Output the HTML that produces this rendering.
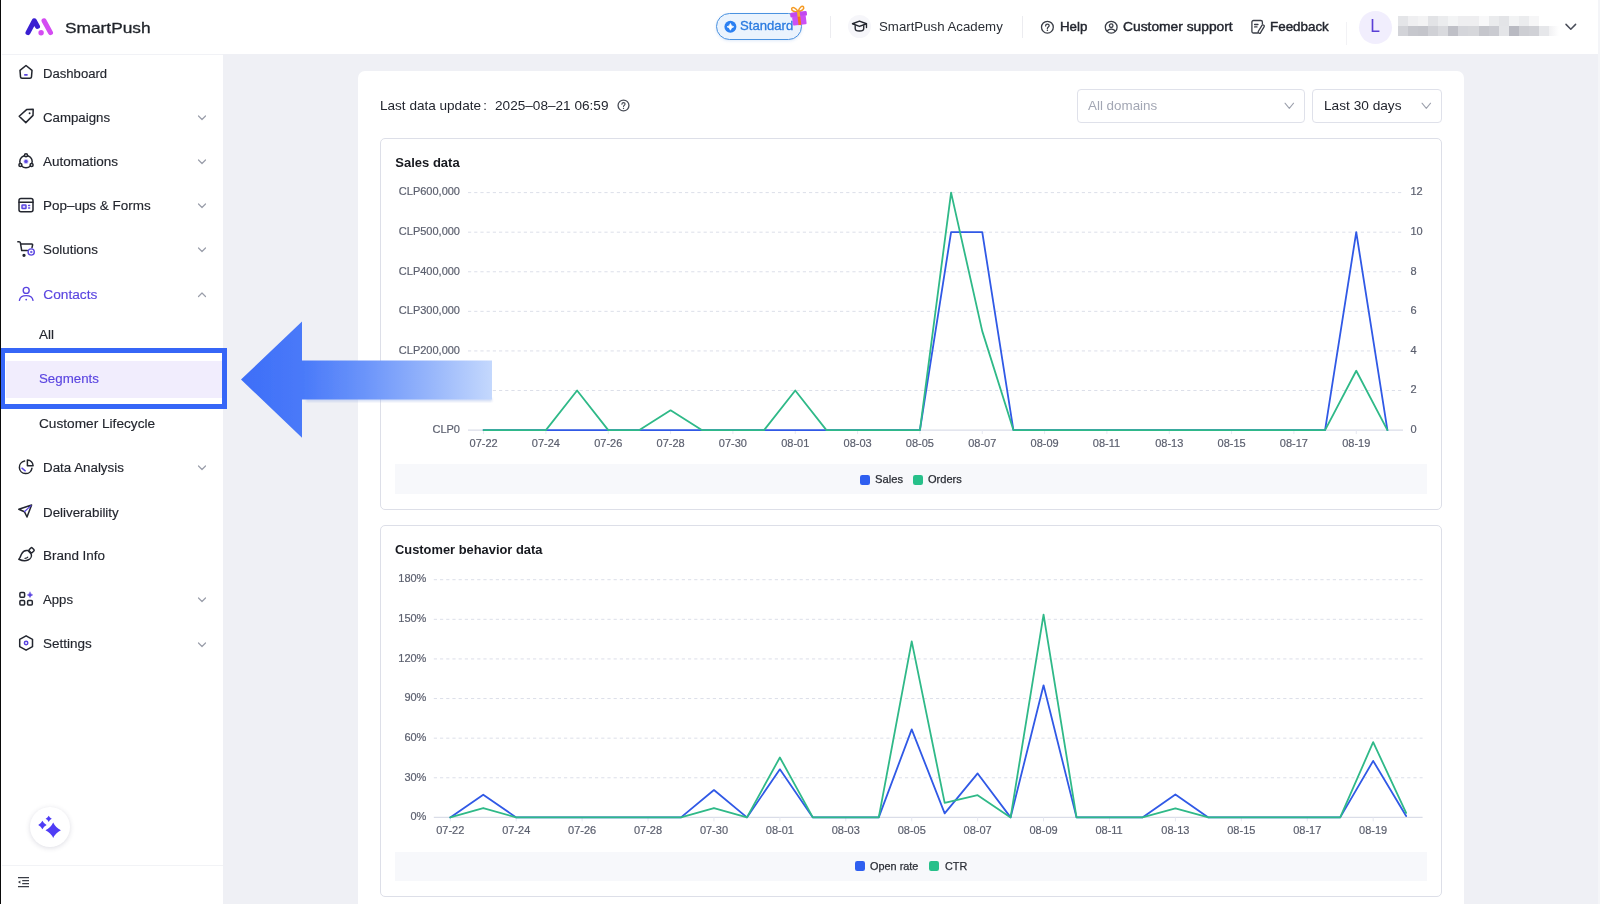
<!DOCTYPE html>
<html><head><meta charset="utf-8"><title>SmartPush</title>
<style>
*{box-sizing:border-box;margin:0;padding:0}
html,body{width:1600px;height:904px;overflow:hidden;background:#eff0f5;font-family:"Liberation Sans",sans-serif;}
.t{position:absolute;white-space:nowrap;}
.abs{position:absolute;}
svg{position:absolute;overflow:visible}
</style></head><body><div id="root" style="position:absolute;left:0;top:0;width:1600px;height:904px;will-change:transform;">

<div class="abs" style="left:0;top:0;width:1600px;height:54px;background:#fff;"></div>
<svg style="left:0;top:0" width="70" height="54" viewBox="0 0 70 54">
<path d="M28 32.6 L34.3 20.8 L37.5 26.4" fill="none" stroke="#3a1fd1" stroke-width="5" stroke-linecap="round" stroke-linejoin="round"/>
<path d="M44 20.8 L50.5 32.6" fill="none" stroke="#d44cf2" stroke-width="5" stroke-linecap="round"/>
<circle cx="41.1" cy="32.7" r="2.7" fill="#d44cf2"/>
</svg>
<div class="t" style="left:64.50px;top:17.75px;font-size:15.4px;line-height:20px;color:#1f2329;transform:scaleX(1.1251);transform-origin:0 50%;-webkit-text-stroke:0.3px #1f2329;">SmartPush</div>
<div class="abs" style="left:715.6px;top:13.2px;width:86.6px;height:26.6px;border-radius:14px;border:1.5px solid #4a92e0;box-shadow:0 1px 3px rgba(80,140,220,.18);background:#eaf3fd;"></div>
<svg style="left:724px;top:20px" width="14" height="14" viewBox="0 0 14 14">
<circle cx="6.4" cy="6.8" r="6" fill="#2b80f2"/>
<path d="M6.4 3.4Q7 6.2 9.8 6.8Q7 7.4 6.4 10.2Q5.8 7.4 3 6.8Q5.8 6.2 6.4 3.4Z" fill="#fff" stroke="#fff" stroke-width=".7" stroke-linejoin="round"/></svg>
<div class="t" style="left:739.80px;top:16.25px;font-size:12.6px;line-height:20px;color:#2b7be0;transform:scaleX(1.0402);transform-origin:0 50%;-webkit-text-stroke:0.3px #2b7be0;">Standard</div>
<svg style="left:788px;top:4px" width="22" height="24" viewBox="0 0 22 24"><g transform="rotate(-7 10.8 13)">
<path d="M10.9 8C9.2 3.6 5.7 1.6 4.7 3.9C4 6 7.5 7.6 10.9 8Z" fill="none" stroke="#f59a23" stroke-width="1.5"/>
<path d="M10.9 8C12.2 3.4 15.8 1.5 16.8 3.7C17.5 5.8 14.2 7.5 10.9 8Z" fill="none" stroke="#f59a23" stroke-width="1.5"/>
<rect x="2.5" y="7.8" width="16.8" height="4.8" rx="1.4" fill="#c248f0"/>
<rect x="4.1" y="12" width="13.7" height="9" rx="1.2" fill="#cc50f4"/>
<rect x="9.6" y="12.4" width="2.7" height="8.7" fill="#f6701c"/>
<rect x="9.6" y="7.8" width="2.7" height="4.8" fill="#f8ae2c"/>
</g></svg>
<div class="abs" style="left:830px;top:16px;width:1px;height:22px;background:#ececf0;"></div>
<div class="abs" style="left:848.4px;top:15.3px;width:22.8px;height:22.8px;border-radius:12px;background:#f6f6fa;"></div>
<svg style="left:851.2px;top:19.4px" width="17.3" height="14.6" viewBox="0 0 19 16">
<path d="M1.6 5.2L9.3 2.2L17 5.2L9.3 8.2Z" fill="none" stroke="#23262f" stroke-width="1.5" stroke-linejoin="round"/>
<path d="M4.6 6.8V10.4C4.6 12.2 6.8 13.2 9.3 13.2C11.8 13.2 14 12.2 14 10.4V6.8" fill="none" stroke="#23262f" stroke-width="1.5"/>
<path d="M17 5.4V9.4" stroke="#23262f" stroke-width="1.5" stroke-linecap="round"/>
</svg>
<div class="t" style="left:879.30px;top:17.25px;font-size:12.2px;line-height:20px;color:#2b2f36;transform:scaleX(1.0877);transform-origin:0 50%;">SmartPush Academy</div>
<div class="abs" style="left:1022px;top:16px;width:1px;height:22px;background:#ececf0;"></div>
<svg style="left:1040px;top:20px" width="15" height="15" viewBox="0 0 15 15">
<circle cx="7.4" cy="7.2" r="5.9" fill="none" stroke="#3a3e47" stroke-width="1.3"/>
<path d="M5.6 5.9C5.6 4.7 6.4 4.1 7.4 4.1C8.5 4.1 9.2 4.8 9.2 5.7C9.2 6.9 7.4 7 7.4 8.5" fill="none" stroke="#3a3e47" stroke-width="1.3" stroke-linecap="round"/>
<circle cx="7.4" cy="10.3" r="0.75" fill="#30343b"/></svg>
<div class="t" style="left:1059.60px;top:17.25px;font-size:12.2px;line-height:20px;color:#23262f;transform:scaleX(1.0918);transform-origin:0 50%;-webkit-text-stroke:0.4px #23262f;">Help</div>
<svg style="left:1104px;top:20px" width="15" height="15" viewBox="0 0 15 15">
<circle cx="7.2" cy="7.2" r="5.9" fill="none" stroke="#3a3e47" stroke-width="1.3"/>
<circle cx="7.2" cy="5.7" r="1.8" fill="none" stroke="#3a3e47" stroke-width="1.3"/>
<path d="M3.2 11.6C3.8 9.8 5.4 9.2 7.2 9.2C9 9.2 10.6 9.8 11.2 11.6" fill="none" stroke="#3a3e47" stroke-width="1.3"/></svg>
<div class="t" style="left:1123.40px;top:17.25px;font-size:12.2px;line-height:20px;color:#23262f;transform:scaleX(1.1324);transform-origin:0 50%;-webkit-text-stroke:0.4px #23262f;">Customer support</div>
<svg style="left:1250px;top:19px" width="16" height="16" viewBox="0 0 16 16" fill="none" stroke="#3a3e47" stroke-width="1.3" stroke-linecap="round" stroke-linejoin="round">
<path d="M7.6 14H3.5C2.6 14 1.9 13.3 1.9 12.4V3.1C1.9 2.2 2.6 1.5 3.5 1.5H10.8C11.7 1.5 12.4 2.2 12.4 3.1V5"/>
<path d="M4.6 5.5H8M4.6 7.9H7"/>
<rect x="-1.3" y="-4.6" width="2.6" height="9.2" rx="1" transform="translate(11.2 10.1) rotate(31)" fill="#fff"/>
</svg>
<div class="t" style="left:1269.60px;top:17.25px;font-size:12.2px;line-height:20px;color:#23262f;transform:scaleX(1.0987);transform-origin:0 50%;-webkit-text-stroke:0.4px #23262f;">Feedback</div>
<div class="abs" style="left:1346px;top:22px;width:1px;height:22.5px;background:#f2f2f5;"></div>
<div class="abs" style="left:1358.5px;top:10.5px;width:33px;height:33px;border-radius:17px;background:#f1eefd;"></div>
<div class="t" style="left:1370.30px;top:16.25px;font-size:17.5px;line-height:20px;color:#5a3fd6;">L</div>
<div class="abs" style="left:1398.00px;top:15.5px;width:10.2px;height:10px;background:#e4e5e8"></div>
<div class="abs" style="left:1398.00px;top:25.5px;width:10.2px;height:10px;background:#d2d3d8"></div>
<div class="abs" style="left:1408.07px;top:15.5px;width:10.2px;height:10px;background:#efeff1"></div>
<div class="abs" style="left:1408.07px;top:25.5px;width:10.2px;height:10px;background:#c6c7cd"></div>
<div class="abs" style="left:1418.14px;top:15.5px;width:10.2px;height:10px;background:#f3f3f4"></div>
<div class="abs" style="left:1418.14px;top:25.5px;width:10.2px;height:10px;background:#c4c5cb"></div>
<div class="abs" style="left:1428.21px;top:15.5px;width:10.2px;height:10px;background:#e2e3e6"></div>
<div class="abs" style="left:1428.21px;top:25.5px;width:10.2px;height:10px;background:#d0d1d6"></div>
<div class="abs" style="left:1438.28px;top:15.5px;width:10.2px;height:10px;background:#ebecee"></div>
<div class="abs" style="left:1438.28px;top:25.5px;width:10.2px;height:10px;background:#d9dade"></div>
<div class="abs" style="left:1448.35px;top:15.5px;width:10.2px;height:10px;background:#f3f4f5"></div>
<div class="abs" style="left:1448.35px;top:25.5px;width:10.2px;height:10px;background:#bfc0c7"></div>
<div class="abs" style="left:1458.42px;top:15.5px;width:10.2px;height:10px;background:#eeeef0"></div>
<div class="abs" style="left:1458.42px;top:25.5px;width:10.2px;height:10px;background:#d4d5da"></div>
<div class="abs" style="left:1468.49px;top:15.5px;width:10.2px;height:10px;background:#eeeef0"></div>
<div class="abs" style="left:1468.49px;top:25.5px;width:10.2px;height:10px;background:#d6d7db"></div>
<div class="abs" style="left:1478.56px;top:15.5px;width:10.2px;height:10px;background:#f8f8f9"></div>
<div class="abs" style="left:1478.56px;top:25.5px;width:10.2px;height:10px;background:#c5c6cc"></div>
<div class="abs" style="left:1488.63px;top:15.5px;width:10.2px;height:10px;background:#eaebed"></div>
<div class="abs" style="left:1488.63px;top:25.5px;width:10.2px;height:10px;background:#cacbd1"></div>
<div class="abs" style="left:1498.70px;top:15.5px;width:10.2px;height:10px;background:#e3e4e7"></div>
<div class="abs" style="left:1498.70px;top:25.5px;width:10.2px;height:10px;background:#e4e5e8"></div>
<div class="abs" style="left:1508.77px;top:15.5px;width:10.2px;height:10px;background:#f2f3f4"></div>
<div class="abs" style="left:1508.77px;top:25.5px;width:10.2px;height:10px;background:#b9bac2"></div>
<div class="abs" style="left:1518.84px;top:15.5px;width:10.2px;height:10px;background:#ebecee"></div>
<div class="abs" style="left:1518.84px;top:25.5px;width:10.2px;height:10px;background:#cdced3"></div>
<div class="abs" style="left:1528.91px;top:15.5px;width:10.2px;height:10px;background:#f6f6f7"></div>
<div class="abs" style="left:1528.91px;top:25.5px;width:10.2px;height:10px;background:#d0d1d6"></div>
<div class="abs" style="left:1538.98px;top:15.5px;width:10.2px;height:10px;background:#ffffff"></div>
<div class="abs" style="left:1538.98px;top:25.5px;width:10.2px;height:10px;background:#e6e7ea"></div>
<div class="abs" style="left:1549px;top:25.5px;width:10px;height:10px;background:linear-gradient(90deg,#f1f1f3,#ffffff)"></div>
<svg style="left:1564px;top:21px" width="14" height="12" viewBox="0 0 14 12">
<path d="M2 3.4L6.8 8.2L11.6 3.4" fill="none" stroke="#4a4e5a" stroke-width="1.5" stroke-linecap="round" stroke-linejoin="round"/></svg>
<div class="abs" style="left:1598px;top:0;width:2px;height:904px;background:#f4f5f8;"></div>
<div class="abs" style="left:0;top:54px;width:223px;height:850px;background:#fff;"></div>
<div class="abs" style="left:2px;top:54px;width:221px;height:1px;background:#f1f2f6;"></div>
<div class="t" style="left:43.30px;top:63.75px;font-size:13.7px;line-height:20px;color:#23262e;transform:scaleX(0.9579);transform-origin:0 50%;-webkit-text-stroke:0.15px #23262e;">Dashboard</div>
<div class="t" style="left:43.30px;top:107.75px;font-size:13.7px;line-height:20px;color:#23262e;transform:scaleX(0.9683);transform-origin:0 50%;-webkit-text-stroke:0.15px #23262e;">Campaigns</div>
<svg style="left:197.3px;top:112.8px" width="10" height="10" viewBox="0 0 10 10"><path d="M1.5 3L5 6.5L8.5 3" fill="none" stroke="#9a9eaa" stroke-width="1.2" stroke-linecap="round" stroke-linejoin="round"/></svg>
<div class="t" style="left:43.30px;top:151.75px;font-size:13.7px;line-height:20px;color:#23262e;transform:scaleX(0.9874);transform-origin:0 50%;-webkit-text-stroke:0.15px #23262e;">Automations</div>
<svg style="left:197.3px;top:156.9px" width="10" height="10" viewBox="0 0 10 10"><path d="M1.5 3L5 6.5L8.5 3" fill="none" stroke="#9a9eaa" stroke-width="1.2" stroke-linecap="round" stroke-linejoin="round"/></svg>
<div class="t" style="left:43.30px;top:195.75px;font-size:13.7px;line-height:20px;color:#23262e;transform:scaleX(0.9823);transform-origin:0 50%;-webkit-text-stroke:0.15px #23262e;">Pop–ups &amp; Forms</div>
<svg style="left:197.3px;top:200.9px" width="10" height="10" viewBox="0 0 10 10"><path d="M1.5 3L5 6.5L8.5 3" fill="none" stroke="#9a9eaa" stroke-width="1.2" stroke-linecap="round" stroke-linejoin="round"/></svg>
<div class="t" style="left:43.30px;top:239.75px;font-size:13.7px;line-height:20px;color:#23262e;transform:scaleX(0.9741);transform-origin:0 50%;-webkit-text-stroke:0.15px #23262e;">Solutions</div>
<svg style="left:197.3px;top:245.0px" width="10" height="10" viewBox="0 0 10 10"><path d="M1.5 3L5 6.5L8.5 3" fill="none" stroke="#9a9eaa" stroke-width="1.2" stroke-linecap="round" stroke-linejoin="round"/></svg>
<div class="t" style="left:43.30px;top:284.75px;font-size:13.7px;line-height:20px;color:#5a45e0;-webkit-text-stroke:0.15px #5a45e0;">Contacts</div>
<svg style="left:197.3px;top:289.5px" width="10" height="10" viewBox="0 0 10 10"><path d="M1.5 6.5L5 3L8.5 6.5" fill="none" stroke="#9a9eaa" stroke-width="1.2" stroke-linecap="round" stroke-linejoin="round"/></svg>
<div class="t" style="left:38.90px;top:324.75px;font-size:13.5px;line-height:20px;color:#23262e;transform:scaleX(0.9934);transform-origin:0 50%;-webkit-text-stroke:0.15px #23262e;">All</div>
<div class="abs" style="left:6px;top:361px;width:216px;height:36.8px;background:#f1edfd;"></div>
<div class="t" style="left:38.90px;top:368.75px;font-size:13.5px;line-height:20px;color:#5a45e0;transform:scaleX(0.9856);transform-origin:0 50%;-webkit-text-stroke:0.15px #5a45e0;">Segments</div>
<div class="t" style="left:38.90px;top:413.75px;font-size:13.5px;line-height:20px;color:#23262e;transform:scaleX(1.0114);transform-origin:0 50%;-webkit-text-stroke:0.15px #23262e;">Customer Lifecycle</div>
<div class="t" style="left:43.30px;top:457.75px;font-size:13.7px;line-height:20px;color:#23262e;transform:scaleX(0.9746);transform-origin:0 50%;-webkit-text-stroke:0.15px #23262e;">Data Analysis</div>
<svg style="left:197.3px;top:463.0px" width="10" height="10" viewBox="0 0 10 10"><path d="M1.5 3L5 6.5L8.5 3" fill="none" stroke="#9a9eaa" stroke-width="1.2" stroke-linecap="round" stroke-linejoin="round"/></svg>
<div class="t" style="left:43.30px;top:502.75px;font-size:13.7px;line-height:20px;color:#23262e;transform:scaleX(0.9760);transform-origin:0 50%;-webkit-text-stroke:0.15px #23262e;">Deliverability</div>
<div class="t" style="left:43.30px;top:545.75px;font-size:13.7px;line-height:20px;color:#23262e;transform:scaleX(0.9824);transform-origin:0 50%;-webkit-text-stroke:0.15px #23262e;">Brand Info</div>
<div class="t" style="left:43.30px;top:589.75px;font-size:13.7px;line-height:20px;color:#23262e;transform:scaleX(0.9609);transform-origin:0 50%;-webkit-text-stroke:0.15px #23262e;">Apps</div>
<svg style="left:197.3px;top:595.3px" width="10" height="10" viewBox="0 0 10 10"><path d="M1.5 3L5 6.5L8.5 3" fill="none" stroke="#9a9eaa" stroke-width="1.2" stroke-linecap="round" stroke-linejoin="round"/></svg>
<div class="t" style="left:43.30px;top:633.75px;font-size:13.7px;line-height:20px;color:#23262e;transform:scaleX(0.9859);transform-origin:0 50%;-webkit-text-stroke:0.15px #23262e;">Settings</div>
<svg style="left:197.3px;top:639.7px" width="10" height="10" viewBox="0 0 10 10"><path d="M1.5 3L5 6.5L8.5 3" fill="none" stroke="#9a9eaa" stroke-width="1.2" stroke-linecap="round" stroke-linejoin="round"/></svg>
<svg style="left:17px;top:63.6px" width="18" height="18" viewBox="0 0 18 18" fill="none" stroke="#23262f" stroke-width="1.5" stroke-linecap="round" stroke-linejoin="round"><path d="M3 6.4L9 1.5L15 6.4L14.5 12.8C14.4 13.7 13.8 14.2 13 14.2H5C4.2 14.2 3.6 13.7 3.5 12.8Z"/><path d="M7.8 10.9H10" stroke="#5a45e0" stroke-width="1.6"/></svg>
<svg style="left:17px;top:107.4px" width="18" height="18" viewBox="0 0 18 18" fill="none" stroke="#23262f" stroke-width="1.5" stroke-linecap="round" stroke-linejoin="round"><path d="M2.2 9.2L9.6 2.6L16.2 2.2L16 8.4L8.8 15.6Z"/><circle cx="12.6" cy="6.2" r="0.95" fill="#23262f" stroke="none"/></svg>
<svg style="left:17px;top:152.0px" width="18" height="18" viewBox="0 0 18 18" fill="none" stroke="#23262f" stroke-width="1.5" stroke-linecap="round" stroke-linejoin="round"><circle cx="9" cy="9.6" r="6.2"/><circle cx="9" cy="9.4" r="1.7" fill="#5a45e0" stroke="#5a45e0" stroke-width="1.6" stroke-opacity=".35"/><circle cx="9" cy="3.2" r="1.5" fill="#fff"/><circle cx="3.4" cy="13" r="1.5" fill="#fff"/><circle cx="14.6" cy="13" r="1.5" fill="#fff"/></svg>
<svg style="left:17px;top:196.4px" width="18" height="18" viewBox="0 0 18 18" fill="none" stroke="#23262f" stroke-width="1.5" stroke-linecap="round" stroke-linejoin="round"><rect x="2" y="2.4" width="14" height="13.4" rx="2"/><path d="M2 6.2H16"/><rect x="5" y="9" width="4" height="3.6" rx=".6" stroke="#5a45e0" fill="#dcd7fb"/><path d="M11.6 9.6H12.6M11.6 12H12.6" stroke="#5a45e0" stroke-width="1.5"/></svg>
<svg style="left:17px;top:241.0px" width="18" height="18" viewBox="0 0 18 18" fill="none" stroke="#23262f" stroke-width="1.5" stroke-linecap="round" stroke-linejoin="round"><path d="M0.9 0.8C2.2 0.5 3.2 0.9 3.4 1.8L4.7 9.6H10.4"/><path d="M4 3H14.7C15.4 3 15.7 3.4 15.6 4L15 6.6"/><circle cx="7" cy="14.3" r=".9" fill="#23262f"/><circle cx="14.2" cy="11" r="3.1" stroke="#5a45e0" stroke-width="1.4" fill="#fff"/><circle cx="14.2" cy="11" r=".8" fill="#5a45e0" stroke="#5a45e0" stroke-width=".6"/></svg>
<svg style="left:17px;top:284.9px" width="18" height="18" viewBox="0 0 18 18" fill="none" stroke="#5a45e0" stroke-width="1.4" stroke-linecap="round"><circle cx="9.2" cy="5.4" r="3"/><path d="M2.4 15.4C3 11.8 5.8 10.6 9.2 10.6C12.6 10.6 15.4 11.8 16 15.4"/><circle cx="9.2" cy="14.6" r=".9" fill="#5a45e0" stroke="none"/></svg>
<svg style="left:17px;top:457.6px" width="18" height="18" viewBox="0 0 18 18" fill="none" stroke="#23262f" stroke-width="1.5" stroke-linecap="round" stroke-linejoin="round"><path d="M7.6 3.1A6.3 6.3 0 1 0 14.9 10.3"/><path d="M10.4 2V7.7H16.1A5.7 5.7 0 0 0 10.4 2Z"/><path d="M5 10.2L8.2 12.8" stroke="#5a45e0" stroke-width="1.5"/></svg>
<svg style="left:17px;top:502.0px" width="18" height="18" viewBox="0 0 18 18" fill="none" stroke="#23262f" stroke-width="1.5" stroke-linecap="round" stroke-linejoin="round"><path d="M1.8 7.3L14.6 3L10 15L7.4 9.7Z"/><path d="M7.6 9.5L14 3.6" stroke="#5a45e0" stroke-width="1.2"/></svg>
<svg style="left:17px;top:546.4px" width="18" height="18" viewBox="0 0 18 18" fill="none" stroke="#23262f" stroke-width="1.5" stroke-linecap="round" stroke-linejoin="round"><path d="M1.8 13.2C3.2 12 3.6 9.6 4.6 7.8C5.8 5.4 8.4 4 11 4.6L14.2 7.9C15 10.4 13.6 13 11 14C8 15.2 4.4 14.4 1.8 13.2Z"/><rect x="12.5" y="2.1" width="4.2" height="4.2" rx="1" transform="rotate(45 14.6 4.2)" fill="#fff"/><path d="M8 12.4C9.2 12.4 10.2 12 10.8 11.2" stroke-width="1.1"/></svg>
<svg style="left:17px;top:589.8px" width="18" height="18" viewBox="0 0 18 18" fill="none" stroke="#23262f" stroke-width="1.5" stroke-linecap="round" stroke-linejoin="round"><rect x="2.9" y="2.6" width="4.7" height="4.7" rx="1"/><rect x="2.9" y="10.4" width="4.7" height="4.7" rx="1"/><rect x="10.6" y="10.4" width="4.7" height="4.7" rx="1"/><path d="M13 2.2Q13.5 4.3 15.7 4.9Q13.5 5.5 13 7.6Q12.5 5.5 10.3 4.9Q12.5 4.3 13 2.2Z" fill="#5a45e0" stroke="#5a45e0" stroke-width=".5"/></svg>
<svg style="left:17px;top:634.0px" width="18" height="18" viewBox="0 0 18 18" fill="none" stroke="#23262f" stroke-width="1.5" stroke-linecap="round" stroke-linejoin="round"><path d="M9.1 1.8L15.5 5.4V12.6L9.1 16.2L2.7 12.6V5.4Z"/><circle cx="9.1" cy="9" r="1.7" stroke="#5a45e0" stroke-width="1.5"/></svg>
<div class="abs" style="left:0px;top:348px;width:226.8px;height:61px;border:5px solid #3666f7;"></div>
<div class="abs" style="left:29.5px;top:807px;width:40px;height:40px;border-radius:20px;background:#fff;box-shadow:0 1px 5px rgba(50,50,90,.17);"></div>
<svg style="left:0;top:0" width="100" height="904" viewBox="0 0 100 904" fill="#4f3df5"><path d="M53.2 822.5999999999999Q55.664 827.8359999999999 60.900000000000006 830.3Q55.664 832.764 53.2 838.0Q50.736000000000004 832.764 45.5 830.3Q50.736000000000004 827.8359999999999 53.2 822.5999999999999Z"/><path d="M42.4 820.8Q43.744 823.656 46.6 825Q43.744 826.344 42.4 829.2Q41.056 826.344 38.199999999999996 825Q41.056 823.656 42.4 820.8Z"/><path d="M48.7 815.6999999999999Q49.692 817.808 51.800000000000004 818.8Q49.692 819.7919999999999 48.7 821.9Q47.708000000000006 819.7919999999999 45.6 818.8Q47.708000000000006 817.808 48.7 815.6999999999999Z"/></svg>
<div class="abs" style="left:2px;top:864.5px;width:221px;height:1px;background:#f2f3f6;"></div>
<svg style="left:16px;top:875px" width="16" height="14" viewBox="0 0 16 14"><path d="M2 2.6H13M6.2 5.6H13M6.2 8.6H13M2 11.6H13" stroke="#3a3d46" stroke-width="1.1"/><path d="M4.4 5.4V8.8L2 7.1Z" fill="#3a3d46"/></svg>
<div class="abs" style="left:0;top:0;width:1.3px;height:904px;background:#0a0a0a;"></div>
<div class="abs" style="left:358px;top:70.5px;width:1106.2px;height:850px;background:#fff;border-radius:7px;"></div>
<div class="t" style="left:379.60px;top:95.75px;font-size:13px;line-height:20px;color:#23262f;transform:scaleX(1.0427);transform-origin:0 50%;">Last data update</div>
<div class="t" style="left:483.20px;top:95.75px;font-size:13px;line-height:20px;color:#23262f;">:</div>
<div class="t" style="left:495.00px;top:95.75px;font-size:13px;line-height:20px;color:#23262f;transform:scaleX(1.0466);transform-origin:0 50%;">2025–08–21 06:59</div>
<svg style="left:616.9px;top:99.2px" width="13" height="13" viewBox="0 0 13 13">
<circle cx="6.5" cy="6.5" r="5.45" fill="none" stroke="#484c56" stroke-width="1.3"/>
<path d="M4.9 5.3C4.9 4.2 5.6 3.6 6.5 3.6C7.4 3.6 8.1 4.2 8.1 5.1C8.1 6.2 6.5 6.3 6.5 7.6" fill="none" stroke="#484c56" stroke-width="1.1" stroke-linecap="round"/>
<circle cx="6.5" cy="9.4" r=".7" fill="#484c56"/></svg>
<div class="abs" style="left:1076.5px;top:89px;width:228.5px;height:33.5px;border:1px solid #dfe1ea;border-radius:4px;background:#fff;"></div>
<div class="t" style="left:1087.60px;top:95.75px;font-size:13px;line-height:20px;color:#a3a7b4;transform:scaleX(1.0298);transform-origin:0 50%;">All domains</div>
<svg style="left:1283px;top:100px" width="13" height="12" viewBox="0 0 13 12"><path d="M2 3.2L6.3 8.4L10.6 3.2" fill="none" stroke="#9da1ad" stroke-width="1.05" stroke-linecap="round" stroke-linejoin="round"/></svg>
<div class="abs" style="left:1312.2px;top:89px;width:129.8px;height:33.5px;border:1px solid #dfe1ea;border-radius:4px;background:#fff;"></div>
<div class="t" style="left:1323.50px;top:95.75px;font-size:13px;line-height:20px;color:#23262f;transform:scaleX(1.0514);transform-origin:0 50%;">Last 30 days</div>
<svg style="left:1420px;top:100px" width="13" height="12" viewBox="0 0 13 12"><path d="M2 3.2L6.3 8.4L10.6 3.2" fill="none" stroke="#9da1ad" stroke-width="1.05" stroke-linecap="round" stroke-linejoin="round"/></svg>
<div class="abs" style="left:380px;top:138px;width:1062px;height:372px;border:1px solid #dddfe8;border-radius:5px;background:#fff;"></div><div class="t" style="left:395.30px;top:152.75px;font-size:13px;line-height:20px;color:#17191f;font-weight:700;">Sales data</div><svg style="left:0;top:0" width="1600" height="904" viewBox="0 0 1600 904"><path d="M468 192.60H1403" stroke="#dcdfe9" stroke-width="1" stroke-dasharray="3.2 3" fill="none"/><path d="M468 232.18H1403" stroke="#dcdfe9" stroke-width="1" stroke-dasharray="3.2 3" fill="none"/><path d="M468 271.77H1403" stroke="#dcdfe9" stroke-width="1" stroke-dasharray="3.2 3" fill="none"/><path d="M468 311.35H1403" stroke="#dcdfe9" stroke-width="1" stroke-dasharray="3.2 3" fill="none"/><path d="M468 350.93H1403" stroke="#dcdfe9" stroke-width="1" stroke-dasharray="3.2 3" fill="none"/><path d="M468 390.52H1403" stroke="#dcdfe9" stroke-width="1" stroke-dasharray="3.2 3" fill="none"/><path d="M468 430.10H1403" stroke="#dadde8" stroke-width="1.2" fill="none"/><path d="M483.58 430.10v4" stroke="#e6e8f1" stroke-width="1"/><path d="M545.92 430.10v4" stroke="#e6e8f1" stroke-width="1"/><path d="M608.25 430.10v4" stroke="#e6e8f1" stroke-width="1"/><path d="M670.58 430.10v4" stroke="#e6e8f1" stroke-width="1"/><path d="M732.92 430.10v4" stroke="#e6e8f1" stroke-width="1"/><path d="M795.25 430.10v4" stroke="#e6e8f1" stroke-width="1"/><path d="M857.58 430.10v4" stroke="#e6e8f1" stroke-width="1"/><path d="M919.92 430.10v4" stroke="#e6e8f1" stroke-width="1"/><path d="M982.25 430.10v4" stroke="#e6e8f1" stroke-width="1"/><path d="M1044.58 430.10v4" stroke="#e6e8f1" stroke-width="1"/><path d="M1106.92 430.10v4" stroke="#e6e8f1" stroke-width="1"/><path d="M1169.25 430.10v4" stroke="#e6e8f1" stroke-width="1"/><path d="M1231.58 430.10v4" stroke="#e6e8f1" stroke-width="1"/><path d="M1293.92 430.10v4" stroke="#e6e8f1" stroke-width="1"/><path d="M1356.25 430.10v4" stroke="#e6e8f1" stroke-width="1"/><polyline points="483.58,430.10 514.75,430.10 545.92,430.10 577.08,430.10 608.25,430.10 639.42,430.10 670.58,430.10 701.75,430.10 732.92,430.10 764.08,430.10 795.25,430.10 826.42,430.10 857.58,430.10 888.75,430.10 919.92,430.10 951.08,232.18 982.25,232.18 1013.42,430.10 1044.58,430.10 1075.75,430.10 1106.92,430.10 1138.08,430.10 1169.25,430.10 1200.42,430.10 1231.58,430.10 1262.75,430.10 1293.92,430.10 1325.08,430.10 1356.25,232.18 1387.42,430.10" fill="none" stroke="#3059e6" stroke-width="1.8" stroke-linejoin="round" stroke-linecap="round"/><polyline points="483.58,430.10 514.75,430.10 545.92,430.10 577.08,390.52 608.25,430.10 639.42,430.10 670.58,410.31 701.75,430.10 732.92,430.10 764.08,430.10 795.25,390.52 826.42,430.10 857.58,430.10 888.75,430.10 919.92,430.10 951.08,192.60 982.25,331.14 1013.42,430.10 1044.58,430.10 1075.75,430.10 1106.92,430.10 1138.08,430.10 1169.25,430.10 1200.42,430.10 1231.58,430.10 1262.75,430.10 1293.92,430.10 1325.08,430.10 1356.25,370.73 1387.42,430.10" fill="none" stroke="#2fb988" stroke-width="1.8" stroke-linejoin="round" stroke-linecap="round"/></svg><div class="t" style="left:398.84px;top:181.25px;font-size:11px;line-height:20px;color:#5b5f6e;-webkit-text-stroke:0.2px #5b5f6e;">CLP600,000</div><div class="t" style="left:398.84px;top:221.25px;font-size:11px;line-height:20px;color:#5b5f6e;-webkit-text-stroke:0.2px #5b5f6e;">CLP500,000</div><div class="t" style="left:398.84px;top:261.25px;font-size:11px;line-height:20px;color:#5b5f6e;-webkit-text-stroke:0.2px #5b5f6e;">CLP400,000</div><div class="t" style="left:398.84px;top:300.25px;font-size:11px;line-height:20px;color:#5b5f6e;-webkit-text-stroke:0.2px #5b5f6e;">CLP300,000</div><div class="t" style="left:398.84px;top:340.25px;font-size:11px;line-height:20px;color:#5b5f6e;-webkit-text-stroke:0.2px #5b5f6e;">CLP200,000</div><div class="t" style="left:432.48px;top:419.25px;font-size:11px;line-height:20px;color:#5b5f6e;-webkit-text-stroke:0.2px #5b5f6e;">CLP0</div><div class="t" style="left:1410.40px;top:181.25px;font-size:11px;line-height:20px;color:#5b5f6e;-webkit-text-stroke:0.2px #5b5f6e;">12</div><div class="t" style="left:1410.40px;top:221.25px;font-size:11px;line-height:20px;color:#5b5f6e;-webkit-text-stroke:0.2px #5b5f6e;">10</div><div class="t" style="left:1410.40px;top:261.25px;font-size:11px;line-height:20px;color:#5b5f6e;-webkit-text-stroke:0.2px #5b5f6e;">8</div><div class="t" style="left:1410.40px;top:300.25px;font-size:11px;line-height:20px;color:#5b5f6e;-webkit-text-stroke:0.2px #5b5f6e;">6</div><div class="t" style="left:1410.40px;top:340.25px;font-size:11px;line-height:20px;color:#5b5f6e;-webkit-text-stroke:0.2px #5b5f6e;">4</div><div class="t" style="left:1410.40px;top:379.25px;font-size:11px;line-height:20px;color:#5b5f6e;-webkit-text-stroke:0.2px #5b5f6e;">2</div><div class="t" style="left:1410.40px;top:419.25px;font-size:11px;line-height:20px;color:#5b5f6e;-webkit-text-stroke:0.2px #5b5f6e;">0</div><div class="t" style="left:469.52px;top:433.25px;font-size:11px;line-height:20px;color:#5b5f6e;-webkit-text-stroke:0.2px #5b5f6e;">07-22</div><div class="t" style="left:531.85px;top:433.25px;font-size:11px;line-height:20px;color:#5b5f6e;-webkit-text-stroke:0.2px #5b5f6e;">07-24</div><div class="t" style="left:594.18px;top:433.25px;font-size:11px;line-height:20px;color:#5b5f6e;-webkit-text-stroke:0.2px #5b5f6e;">07-26</div><div class="t" style="left:656.52px;top:433.25px;font-size:11px;line-height:20px;color:#5b5f6e;-webkit-text-stroke:0.2px #5b5f6e;">07-28</div><div class="t" style="left:718.85px;top:433.25px;font-size:11px;line-height:20px;color:#5b5f6e;-webkit-text-stroke:0.2px #5b5f6e;">07-30</div><div class="t" style="left:781.18px;top:433.25px;font-size:11px;line-height:20px;color:#5b5f6e;-webkit-text-stroke:0.2px #5b5f6e;">08-01</div><div class="t" style="left:843.52px;top:433.25px;font-size:11px;line-height:20px;color:#5b5f6e;-webkit-text-stroke:0.2px #5b5f6e;">08-03</div><div class="t" style="left:905.85px;top:433.25px;font-size:11px;line-height:20px;color:#5b5f6e;-webkit-text-stroke:0.2px #5b5f6e;">08-05</div><div class="t" style="left:968.18px;top:433.25px;font-size:11px;line-height:20px;color:#5b5f6e;-webkit-text-stroke:0.2px #5b5f6e;">08-07</div><div class="t" style="left:1030.52px;top:433.25px;font-size:11px;line-height:20px;color:#5b5f6e;-webkit-text-stroke:0.2px #5b5f6e;">08-09</div><div class="t" style="left:1092.85px;top:433.25px;font-size:11px;line-height:20px;color:#5b5f6e;-webkit-text-stroke:0.2px #5b5f6e;">08-11</div><div class="t" style="left:1155.18px;top:433.25px;font-size:11px;line-height:20px;color:#5b5f6e;-webkit-text-stroke:0.2px #5b5f6e;">08-13</div><div class="t" style="left:1217.52px;top:433.25px;font-size:11px;line-height:20px;color:#5b5f6e;-webkit-text-stroke:0.2px #5b5f6e;">08-15</div><div class="t" style="left:1279.85px;top:433.25px;font-size:11px;line-height:20px;color:#5b5f6e;-webkit-text-stroke:0.2px #5b5f6e;">08-17</div><div class="t" style="left:1342.18px;top:433.25px;font-size:11px;line-height:20px;color:#5b5f6e;-webkit-text-stroke:0.2px #5b5f6e;">08-19</div><div class="abs" style="left:394.7px;top:464.4px;width:1032px;height:29.400000000000034px;background:#f7f8fb;"></div><div class="abs" style="left:859.8px;top:474.60px;width:10.3px;height:10.3px;border-radius:2.2px;background:#2f5ff0"></div><div class="t" style="left:875.00px;top:469.25px;font-size:11px;line-height:20px;color:#2b2e36;transform:scaleX(1.0178);transform-origin:0 50%;-webkit-text-stroke:0.25px #2b2e36;">Sales</div><div class="abs" style="left:912.6px;top:474.60px;width:10.3px;height:10.3px;border-radius:2.2px;background:#27c08a"></div><div class="t" style="left:927.80px;top:469.25px;font-size:11px;line-height:20px;color:#2b2e36;transform:scaleX(1.0055);transform-origin:0 50%;-webkit-text-stroke:0.25px #2b2e36;">Orders</div>
<div class="abs" style="left:380px;top:525px;width:1062px;height:371.8px;border:1px solid #dddfe8;border-radius:5px;background:#fff;"></div><div class="t" style="left:395.30px;top:539.75px;font-size:13px;line-height:20px;color:#17191f;transform:scaleX(0.9906);transform-origin:0 50%;font-weight:700;">Customer behavior data</div><svg style="left:0;top:0" width="1600" height="904" viewBox="0 0 1600 904"><path d="M433.8 579.70H1422.6" stroke="#dcdfe9" stroke-width="1" stroke-dasharray="3.2 3" fill="none"/><path d="M433.8 619.32H1422.6" stroke="#dcdfe9" stroke-width="1" stroke-dasharray="3.2 3" fill="none"/><path d="M433.8 658.93H1422.6" stroke="#dcdfe9" stroke-width="1" stroke-dasharray="3.2 3" fill="none"/><path d="M433.8 698.55H1422.6" stroke="#dcdfe9" stroke-width="1" stroke-dasharray="3.2 3" fill="none"/><path d="M433.8 738.17H1422.6" stroke="#dcdfe9" stroke-width="1" stroke-dasharray="3.2 3" fill="none"/><path d="M433.8 777.78H1422.6" stroke="#dcdfe9" stroke-width="1" stroke-dasharray="3.2 3" fill="none"/><path d="M433.8 817.40H1422.6" stroke="#dadde8" stroke-width="1.2" fill="none"/><path d="M450.28 817.40v4" stroke="#e6e8f1" stroke-width="1"/><path d="M516.20 817.40v4" stroke="#e6e8f1" stroke-width="1"/><path d="M582.12 817.40v4" stroke="#e6e8f1" stroke-width="1"/><path d="M648.04 817.40v4" stroke="#e6e8f1" stroke-width="1"/><path d="M713.96 817.40v4" stroke="#e6e8f1" stroke-width="1"/><path d="M779.88 817.40v4" stroke="#e6e8f1" stroke-width="1"/><path d="M845.80 817.40v4" stroke="#e6e8f1" stroke-width="1"/><path d="M911.72 817.40v4" stroke="#e6e8f1" stroke-width="1"/><path d="M977.64 817.40v4" stroke="#e6e8f1" stroke-width="1"/><path d="M1043.56 817.40v4" stroke="#e6e8f1" stroke-width="1"/><path d="M1109.48 817.40v4" stroke="#e6e8f1" stroke-width="1"/><path d="M1175.40 817.40v4" stroke="#e6e8f1" stroke-width="1"/><path d="M1241.32 817.40v4" stroke="#e6e8f1" stroke-width="1"/><path d="M1307.24 817.40v4" stroke="#e6e8f1" stroke-width="1"/><path d="M1373.16 817.40v4" stroke="#e6e8f1" stroke-width="1"/><polyline points="450.28,817.40 483.24,794.69 516.20,817.40 549.16,817.40 582.12,817.40 615.08,817.40 648.04,817.40 681.00,817.40 713.96,790.06 746.92,817.40 779.88,769.33 812.84,817.40 845.80,817.40 878.76,817.40 911.72,729.32 944.68,813.44 977.64,773.43 1010.60,817.40 1043.56,685.34 1076.52,817.40 1109.48,817.40 1142.44,817.40 1175.40,794.42 1208.36,817.40 1241.32,817.40 1274.28,817.40 1307.24,817.40 1340.20,817.40 1373.16,760.88 1406.12,816.08" fill="none" stroke="#3059e6" stroke-width="1.8" stroke-linejoin="round" stroke-linecap="round"/><polyline points="450.28,817.40 483.24,808.02 516.20,817.40 549.16,817.40 582.12,817.40 615.08,817.40 648.04,817.40 681.00,817.40 713.96,808.02 746.92,817.40 779.88,757.45 812.84,817.40 845.80,817.40 878.76,817.40 911.72,641.37 944.68,802.87 977.64,795.21 1010.60,817.40 1043.56,614.56 1076.52,817.40 1109.48,817.40 1142.44,817.40 1175.40,808.42 1208.36,817.40 1241.32,817.40 1274.28,817.40 1307.24,817.40 1340.20,817.40 1373.16,742.13 1406.12,812.91" fill="none" stroke="#2fb988" stroke-width="1.8" stroke-linejoin="round" stroke-linecap="round"/></svg><div class="t" style="left:398.27px;top:568.25px;font-size:11px;line-height:20px;color:#5b5f6e;-webkit-text-stroke:0.2px #5b5f6e;">180%</div><div class="t" style="left:398.27px;top:608.25px;font-size:11px;line-height:20px;color:#5b5f6e;-webkit-text-stroke:0.2px #5b5f6e;">150%</div><div class="t" style="left:398.27px;top:648.25px;font-size:11px;line-height:20px;color:#5b5f6e;-webkit-text-stroke:0.2px #5b5f6e;">120%</div><div class="t" style="left:404.38px;top:687.25px;font-size:11px;line-height:20px;color:#5b5f6e;-webkit-text-stroke:0.2px #5b5f6e;">90%</div><div class="t" style="left:404.38px;top:727.25px;font-size:11px;line-height:20px;color:#5b5f6e;-webkit-text-stroke:0.2px #5b5f6e;">60%</div><div class="t" style="left:404.38px;top:767.25px;font-size:11px;line-height:20px;color:#5b5f6e;-webkit-text-stroke:0.2px #5b5f6e;">30%</div><div class="t" style="left:410.50px;top:806.25px;font-size:11px;line-height:20px;color:#5b5f6e;-webkit-text-stroke:0.2px #5b5f6e;">0%</div><div class="t" style="left:436.21px;top:820.25px;font-size:11px;line-height:20px;color:#5b5f6e;-webkit-text-stroke:0.2px #5b5f6e;">07-22</div><div class="t" style="left:502.13px;top:820.25px;font-size:11px;line-height:20px;color:#5b5f6e;-webkit-text-stroke:0.2px #5b5f6e;">07-24</div><div class="t" style="left:568.05px;top:820.25px;font-size:11px;line-height:20px;color:#5b5f6e;-webkit-text-stroke:0.2px #5b5f6e;">07-26</div><div class="t" style="left:633.97px;top:820.25px;font-size:11px;line-height:20px;color:#5b5f6e;-webkit-text-stroke:0.2px #5b5f6e;">07-28</div><div class="t" style="left:699.89px;top:820.25px;font-size:11px;line-height:20px;color:#5b5f6e;-webkit-text-stroke:0.2px #5b5f6e;">07-30</div><div class="t" style="left:765.81px;top:820.25px;font-size:11px;line-height:20px;color:#5b5f6e;-webkit-text-stroke:0.2px #5b5f6e;">08-01</div><div class="t" style="left:831.73px;top:820.25px;font-size:11px;line-height:20px;color:#5b5f6e;-webkit-text-stroke:0.2px #5b5f6e;">08-03</div><div class="t" style="left:897.65px;top:820.25px;font-size:11px;line-height:20px;color:#5b5f6e;-webkit-text-stroke:0.2px #5b5f6e;">08-05</div><div class="t" style="left:963.57px;top:820.25px;font-size:11px;line-height:20px;color:#5b5f6e;-webkit-text-stroke:0.2px #5b5f6e;">08-07</div><div class="t" style="left:1029.49px;top:820.25px;font-size:11px;line-height:20px;color:#5b5f6e;-webkit-text-stroke:0.2px #5b5f6e;">08-09</div><div class="t" style="left:1095.41px;top:820.25px;font-size:11px;line-height:20px;color:#5b5f6e;-webkit-text-stroke:0.2px #5b5f6e;">08-11</div><div class="t" style="left:1161.33px;top:820.25px;font-size:11px;line-height:20px;color:#5b5f6e;-webkit-text-stroke:0.2px #5b5f6e;">08-13</div><div class="t" style="left:1227.25px;top:820.25px;font-size:11px;line-height:20px;color:#5b5f6e;-webkit-text-stroke:0.2px #5b5f6e;">08-15</div><div class="t" style="left:1293.17px;top:820.25px;font-size:11px;line-height:20px;color:#5b5f6e;-webkit-text-stroke:0.2px #5b5f6e;">08-17</div><div class="t" style="left:1359.09px;top:820.25px;font-size:11px;line-height:20px;color:#5b5f6e;-webkit-text-stroke:0.2px #5b5f6e;">08-19</div><div class="abs" style="left:394.7px;top:852px;width:1032px;height:28.799999999999955px;background:#f7f8fb;"></div><div class="abs" style="left:854.5px;top:861.10px;width:10.3px;height:10.3px;border-radius:2.2px;background:#2f5ff0"></div><div class="t" style="left:870.20px;top:856.25px;font-size:11px;line-height:20px;color:#2b2e36;transform:scaleX(0.9894);transform-origin:0 50%;-webkit-text-stroke:0.25px #2b2e36;">Open rate</div><div class="abs" style="left:928.9px;top:861.10px;width:10.3px;height:10.3px;border-radius:2.2px;background:#27c08a"></div><div class="t" style="left:944.60px;top:856.25px;font-size:11px;line-height:20px;color:#2b2e36;transform:scaleX(0.9821);transform-origin:0 50%;-webkit-text-stroke:0.25px #2b2e36;">CTR</div>
<svg style="left:0;top:0" width="1600" height="904" viewBox="0 0 1600 904">
<defs><linearGradient id="ag" x1="241" y1="0" x2="492" y2="0" gradientUnits="userSpaceOnUse">
<stop offset="0" stop-color="#3d6ef8"/><stop offset=".25" stop-color="#4a7af9"/><stop offset=".5" stop-color="#6c95fa"/><stop offset=".75" stop-color="#96b5fb"/><stop offset="1" stop-color="#c4d8fd"/></linearGradient>
<filter id="ab" x="-5%" y="-5%" width="110%" height="110%"><feGaussianBlur stdDeviation=".7"/></filter>
<filter id="as" x="-5%" y="-10%" width="110%" height="130%"><feGaussianBlur stdDeviation="1.2"/></filter></defs>
<path d="M306 398H492V401.5H306Z" fill="#9db4e8" opacity=".45" filter="url(#as)"/>
<path d="M241 379.5L302 321.5V360.6H492V399.6H302V437.8Z" fill="url(#ag)" filter="url(#ab)"/>
</svg>
</div></body></html>
